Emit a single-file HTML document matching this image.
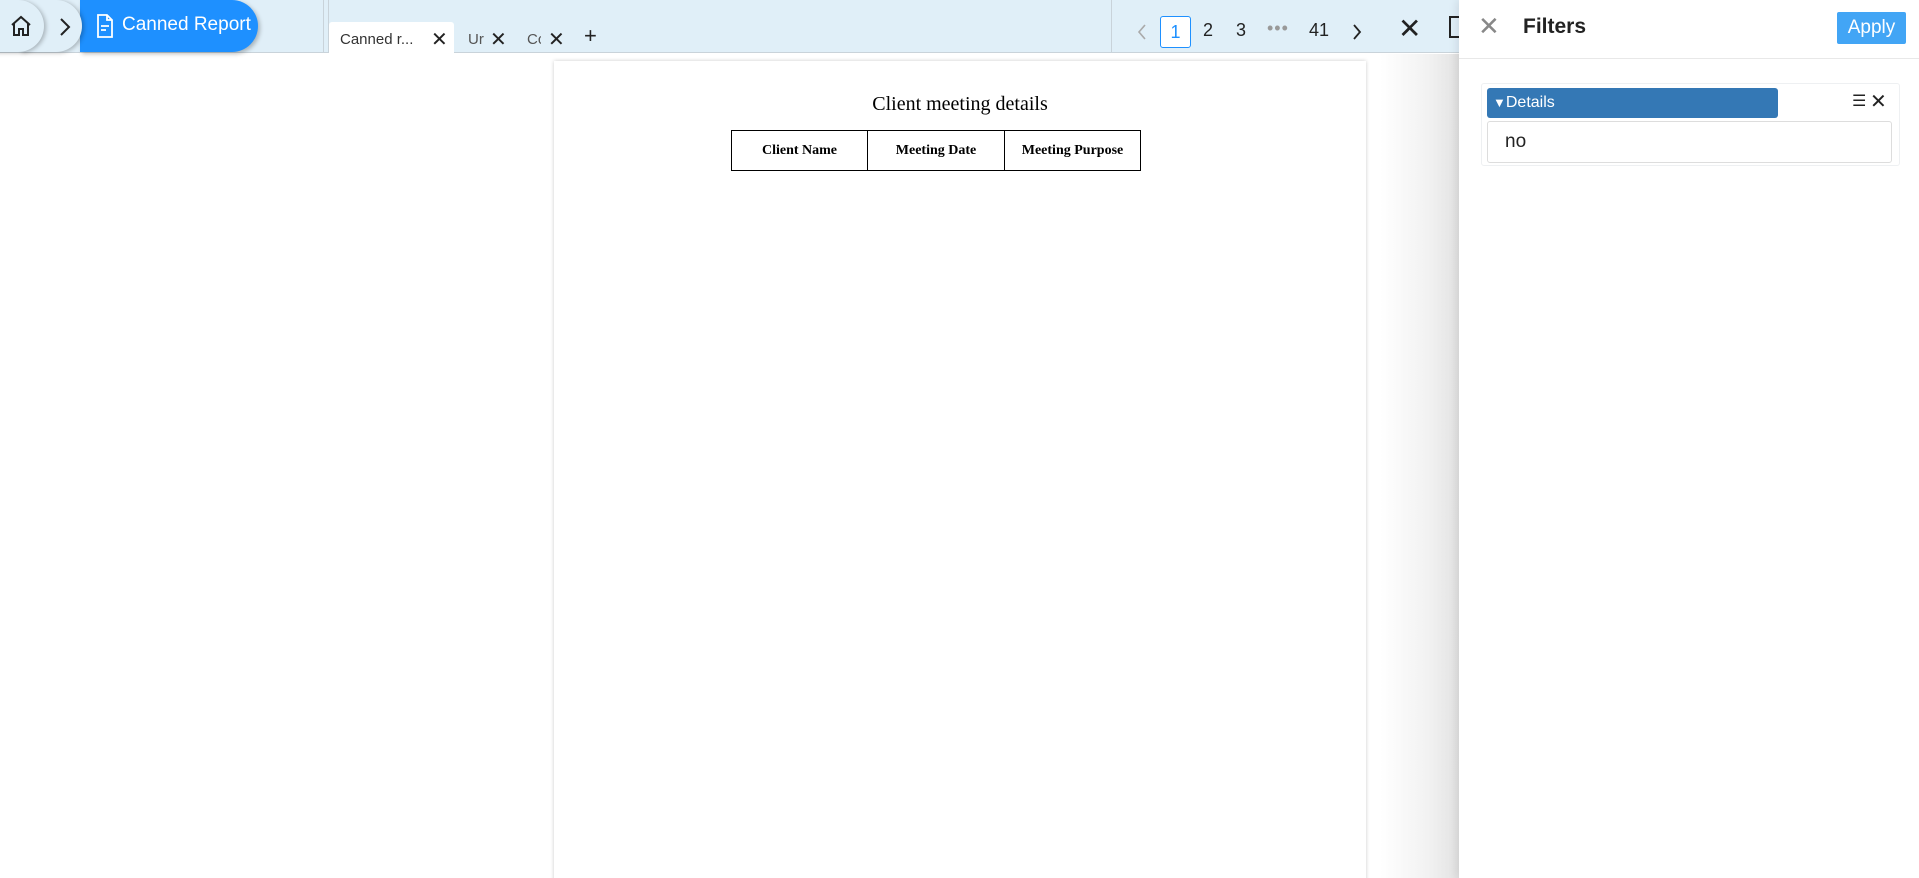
<!DOCTYPE html>
<html><head><meta charset="utf-8"><style>
*{margin:0;padding:0;box-sizing:border-box}
html,body{width:1919px;height:878px;overflow:hidden}
body{background:#fff;font-family:"Liberation Sans",sans-serif;position:relative}
.abs{position:absolute}
.top{left:0;top:0;width:1919px;height:53px;background:#e0eff8;border-bottom:1px solid #c9d3da}
.serif{font-family:"Liberation Serif",serif}
</style></head><body>
<div class="abs top"></div>
<!-- breadcrumb -->
<div class="abs" style="left:80px;top:0;width:178px;height:52px;background:#1e90ff;border-radius:0 26px 26px 0;box-shadow:2px 2px 4px rgba(0,0,0,.25)"></div>
<div class="abs" style="left:20px;top:0;width:62px;height:52px;background:#e0eff8;border-radius:0 26px 26px 0;box-shadow:2px 1px 4px rgba(0,0,0,.25)"></div>
<div class="abs" style="left:-20px;top:0;width:64px;height:52px;background:#e0eff8;border-radius:0 26px 26px 0;box-shadow:2px 1px 4px rgba(0,0,0,.25)"></div>
<svg class="abs" style="left:9px;top:14px" width="24" height="24" viewBox="0 0 24 24" fill="none" stroke="#222" stroke-width="2"><path d="M3 11 L12 3 L21 11 M5 9 V21 H10 V15 H14 V21 H19 V9"/></svg>
<svg class="abs" style="left:58px;top:17px" width="14" height="20" viewBox="0 0 14 20" fill="none" stroke="#222" stroke-width="2"><path d="M3 2 L11 10 L3 18"/></svg>
<svg class="abs" style="left:96px;top:14px" width="18" height="24" viewBox="0 0 18 24" fill="none" stroke="#fff" stroke-width="1.8"><path d="M2 1 H11 L16 6 V23 H2 Z M11 1 V6 H16 M5 12 H13 M5 16 H10"/></svg>
<div class="abs" style="left:122px;top:14px;color:#fff;font-size:19px">Canned Report</div>
<div class="abs" style="left:323px;top:0;width:1px;height:53px;background:#c9d3da"></div>
<div class="abs" style="left:328px;top:0;width:1px;height:53px;background:#c9d3da"></div>
<!-- tabs -->
<div class="abs" style="left:329px;top:22px;width:125px;height:31px;background:#fff;border-radius:3px 3px 0 0"></div>
<div class="abs" style="left:340px;top:31px;font-size:15px;color:#333">Canned r...</div>
<div class="abs" style="left:431px;top:27px;font-size:20px;color:#222">✕</div>
<div class="abs" style="left:468px;top:31px;font-size:15px;color:#555">Ur</div>
<div class="abs" style="left:490px;top:27px;font-size:20px;color:#222">✕</div>
<div class="abs" style="left:527px;top:31px;font-size:15px;color:#555;width:14px;overflow:hidden">Cc</div>
<div class="abs" style="left:548px;top:27px;font-size:20px;color:#222">✕</div>
<div class="abs" style="left:584px;top:23px;font-size:22px;color:#222">+</div>
<!-- pagination -->
<div class="abs" style="left:1111px;top:0;width:1px;height:53px;background:#c9d3da"></div>
<svg class="abs" style="left:1136px;top:23px" width="12" height="18" viewBox="0 0 12 18" fill="none" stroke="#aaa" stroke-width="1.6"><path d="M9 2 L3 9 L9 16"/></svg>
<div class="abs" style="left:1160px;top:16px;width:31px;height:32px;border:1px solid #1e90ff;border-radius:3px;background:#fff;text-align:center;line-height:30px;font-size:18px;color:#1e90ff">1</div>
<div class="abs" style="left:1203px;top:20px;font-size:18px;color:#222">2</div>
<div class="abs" style="left:1236px;top:20px;font-size:18px;color:#222">3</div>
<div class="abs" style="left:1267px;top:18px;font-size:18px;color:#999;letter-spacing:1px">•••</div>
<div class="abs" style="left:1309px;top:20px;font-size:18px;color:#222">41</div>
<svg class="abs" style="left:1351px;top:23px" width="12" height="18" viewBox="0 0 12 18" fill="none" stroke="#222" stroke-width="1.8"><path d="M3 2 L9 9 L3 16"/></svg>
<div class="abs" style="left:1398px;top:12px;font-size:28px;color:#222">✕</div>
<div class="abs" style="left:1449px;top:16px;width:18px;height:22px;border:2px solid #222"></div>
<!-- page -->
<div class="abs" style="left:1380px;top:54px;width:79px;height:824px;background:linear-gradient(to right,#fff,#f2f2f2 60%,#e2e2e2)"></div>
<div class="abs" style="left:554px;top:61px;width:812px;height:830px;background:#fff;box-shadow:0 0 4px rgba(0,0,0,.2)"></div>
<div class="abs serif" style="left:554px;top:93px;width:812px;text-align:center;font-size:20px;color:#000">Client meeting details</div>
<table class="abs serif" style="left:731px;top:130px;width:410px;height:41px;border-collapse:collapse;font-size:14px;font-weight:bold">
<tr><td style="border:1px solid #000;width:136px;text-align:center">Client Name</td><td style="border:1px solid #000;width:137px;text-align:center">Meeting Date</td><td style="border:1px solid #000;text-align:center">Meeting Purpose</td></tr></table>
<!-- filter panel -->
<div class="abs" style="left:1459px;top:0;width:460px;height:878px;background:#fff;box-shadow:-3px 0 8px rgba(0,0,0,.08)"></div>
<div class="abs" style="left:1459px;top:58px;width:460px;height:1px;background:#e8e8e8"></div>
<div class="abs" style="left:1478px;top:11px;font-size:26px;color:#888">✕</div>
<div class="abs" style="left:1523px;top:15px;font-size:21px;font-weight:bold;color:#222">Filters</div>
<div class="abs" style="left:1837px;top:12px;width:69px;height:32px;background:#42a5f5;border-radius:2px;color:#fff;font-size:19px;text-align:center;line-height:32px">Apply</div>
<div class="abs" style="left:1481px;top:83px;width:419px;height:83px;border:1px solid #eef0f2;border-radius:3px"></div>
<div class="abs" style="left:1487px;top:88px;width:291px;height:30px;background:#3478b5;border-radius:3px;color:#fff;font-size:16px;line-height:30px;padding-left:6px"><span style="font-size:13px">▼</span>Details</div>
<div class="abs" style="left:1852px;top:91px;font-size:16px;color:#222">☰</div>
<div class="abs" style="left:1870px;top:89px;font-size:20px;color:#222">✕</div>
<div class="abs" style="left:1487px;top:121px;width:405px;height:42px;border:1px solid #ddd;border-radius:3px;font-size:19px;color:#222;line-height:40px;padding-left:17px">no</div>
</body></html>
